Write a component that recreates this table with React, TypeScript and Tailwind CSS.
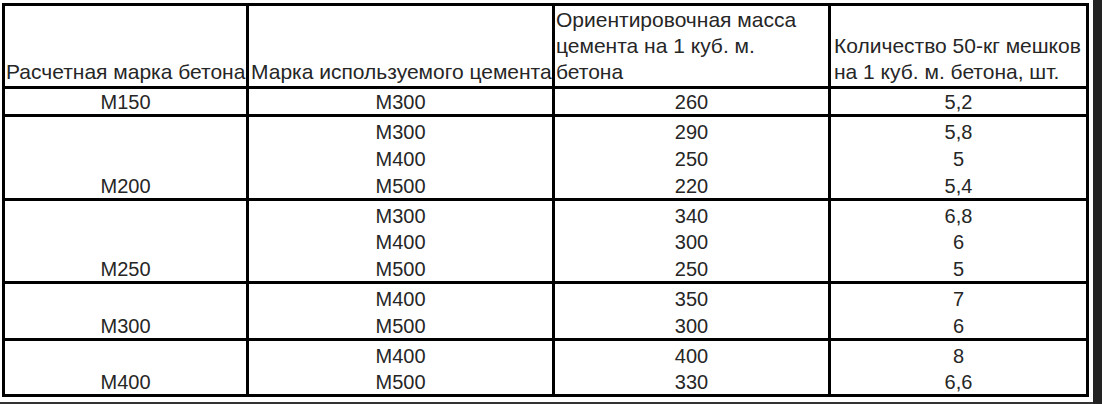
import React from "react";

type Group = { label: string; rows: [string, string, string][]; h: string };

const groups: Group[] = [
  { label: "М150", rows: [["М300", "260", "5,2"]], h: "h-[25px]" },
  {
    label: "М200",
    rows: [
      ["М300", "290", "5,8"],
      ["М400", "250", "5"],
      ["М500", "220", "5,4"],
    ],
    h: "h-[81px]",
  },
  {
    label: "М250",
    rows: [
      ["М300", "340", "6,8"],
      ["М400", "300", "6"],
      ["М500", "250", "5"],
    ],
    h: "h-[80px]",
  },
  {
    label: "М300",
    rows: [
      ["М400", "350", "7"],
      ["М500", "300", "6"],
    ],
    h: "h-[54px]",
  },
  {
    label: "М400",
    rows: [
      ["М400", "400", "8"],
      ["М500", "330", "6,6"],
    ],
    h: "h-[53px]",
  },
];

function SubCol({ values }: { values: string[] }) {
  return (
    <div className="bg-white flex flex-col">
      {values.map((v, i) => (
        <div key={i} className="flex-1 flex items-end justify-center leading-[22px] pb-[1px]">
          {v}
        </div>
      ))}
    </div>
  );
}

export default function App() {
  return (
    <div className="w-[1102px] h-[404px] bg-white flex overflow-hidden font-['Liberation_Sans',Arial,sans-serif] text-[20px] text-[#262626]">
      <div className="w-[1093px] flex flex-col">
        <div className="h-[402px] pl-[2px] pt-[3px]">
          <div className="w-[1087px] grid grid-cols-[241px_303px_273px_255px] gap-[3px] p-[3px] bg-black">
            {/* header */}
            <div className="h-[80px] bg-white flex items-end pl-[1px] pb-[1px] whitespace-nowrap text-[21px] leading-[26px]">
              Расчетная марка бетона
            </div>
            <div className="h-[80px] bg-white flex items-end pl-[2px] pb-[1px] whitespace-nowrap text-[21px] leading-[26px]">
              Марка используемого цемента
            </div>
            <div className="h-[80px] bg-white flex items-end pl-[1px] pb-[1px] whitespace-nowrap text-[21px] leading-[26px]">
              <div>
                Ориентировочная масса
                <br />
                цемента на 1 куб. м.
                <br />
                бетона
              </div>
            </div>
            <div className="h-[80px] bg-white flex items-end pl-[3px] pb-[1px] whitespace-nowrap text-[21px] leading-[26px]">
              <div>
                Количество 50-кг мешков
                <br />
                на 1 куб. м. бетона, шт.
              </div>
            </div>
            {groups.map((g) => (
              <React.Fragment key={g.label}>
                <div className={`${g.h} bg-white flex items-end justify-center leading-[22px] pb-[1px]`}>
                  {g.label}
                </div>
                <SubCol values={g.rows.map((r) => r[0])} />
                <SubCol values={g.rows.map((r) => r[1])} />
                <SubCol values={g.rows.map((r) => r[2])} />
              </React.Fragment>
            ))}
          </div>
        </div>
        <div className="h-[2px] bg-[#333]" />
      </div>
      <div className="w-[9px] bg-[#222]" />
    </div>
  );
}
